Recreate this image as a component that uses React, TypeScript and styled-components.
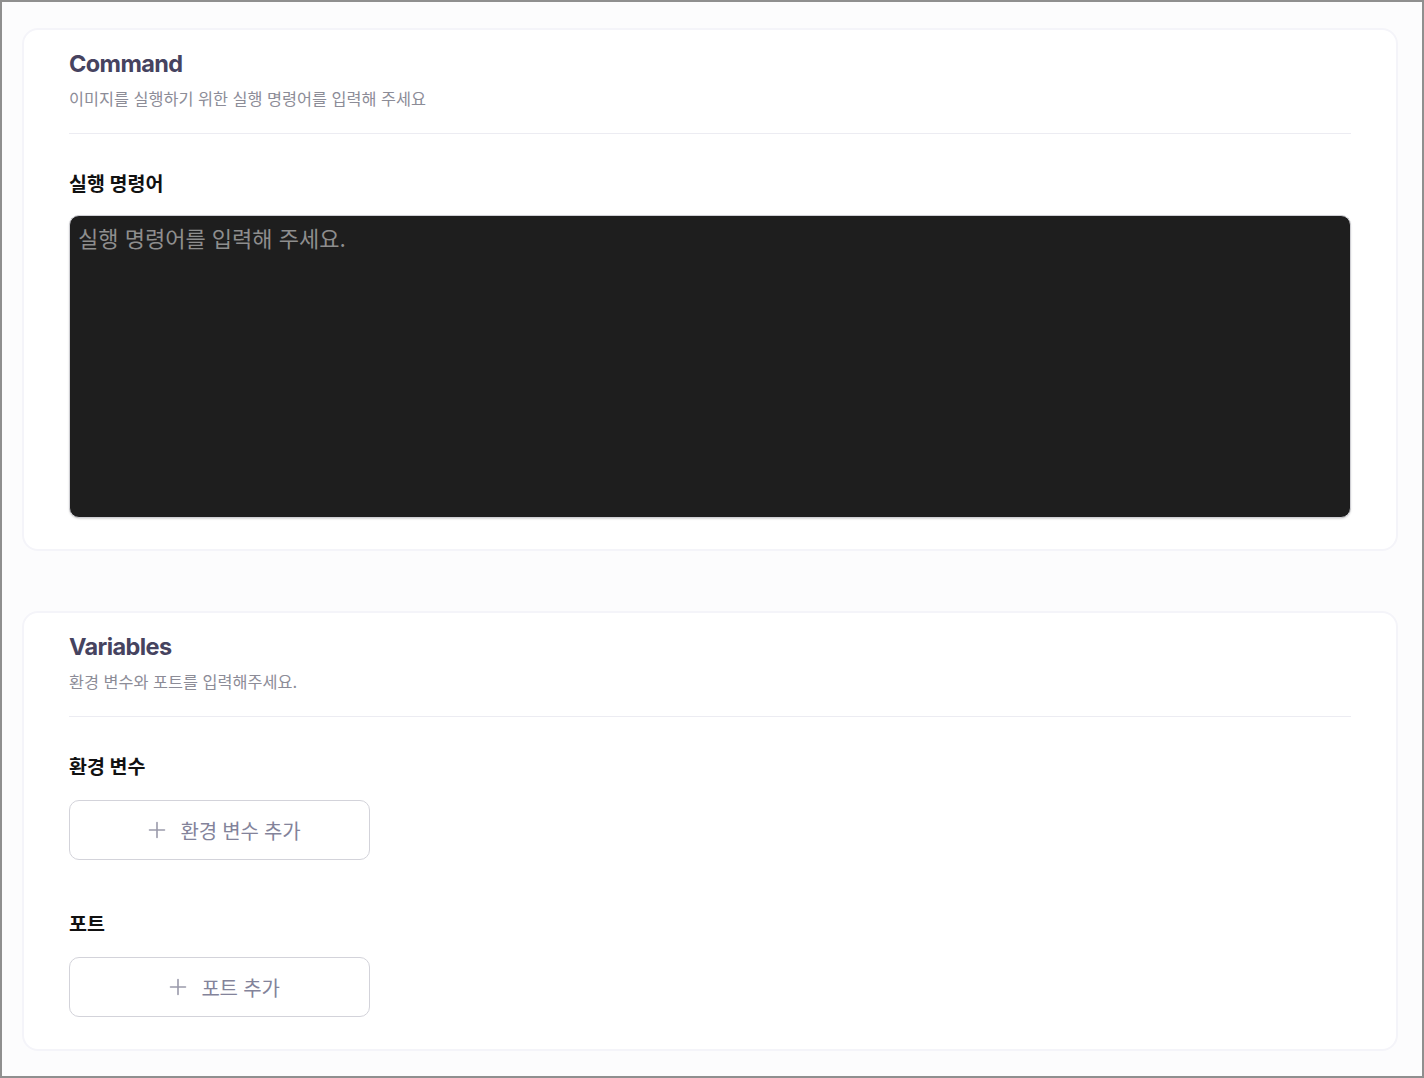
import React from "react";
import styled, { createGlobalStyle } from "styled-components";

const Global = createGlobalStyle`
  html, body { margin: 0; padding: 0; background: #ffffff; }
  * { box-sizing: border-box; }
  body { font-family: Inter, "Noto Sans CJK KR", sans-serif; }
`;

const Frame = styled.div`
  width: 1424px;
  height: 1078px;
  border: 2px solid #8f8f8f;
  background: #fcfcfd;
  padding: 26px 24px 0 20px;
  display: flex;
  flex-direction: column;
  gap: 60px;
  overflow: hidden;
`;

const Card = styled.section<{ $bottom: number }>`
  background: #ffffff;
  border: 2px solid #f4f4f9;
  border-radius: 16px;
  padding: 20px 45px ${(p) => p.$bottom}px 45px;
  display: flex;
  flex-direction: column;
`;

const Title = styled.h2`
  margin: 0;
  font-family: Inter, "Noto Sans CJK KR", sans-serif;
  font-size: 23.5px;
  line-height: 28px;
  font-weight: 700;
  letter-spacing: -0.6px;
  color: #46435f;
`;

const Subtitle = styled.p`
  margin: 11px 0 0;
  font-family: Inter, "Noto Sans CJK KR", sans-serif;
  font-size: 16.3px;
  line-height: 20px;
  color: #8c8c97;
  letter-spacing: 0;
`;

const Divider = styled.hr`
  margin: 24px 0 0;
  border: 0;
  height: 1px;
  background: #ececf2;
`;

const Label = styled.div<{ $top: number }>`
  margin-top: ${(p) => p.$top}px;
  font-family: Inter, "Noto Sans CJK KR", sans-serif;
  font-size: 19.5px;
  line-height: 24px;
  font-weight: 700;
  color: #111111;
  letter-spacing: 0;
`;

const CommandInput = styled.textarea`
  margin-top: 19px;
  width: 100%;
  height: 303px;
  resize: none;
  background: #1e1e1e;
  border: 1px solid #cfcfd4;
  border-radius: 10px;
  padding: 10px 8px;
  font-family: Inter, "Noto Sans CJK KR", sans-serif;
  font-size: 22px;
  line-height: 26px;
  color: #eeeeee;
  outline: none;
  letter-spacing: 0;
  box-shadow: 0 1px 2px rgba(0, 0, 0, 0.15);
  &::placeholder {
    color: #8e8e8e;
  }
`;

const AddButton = styled.button`
  margin-top: 21px;
  width: 301px;
  height: 60px;
  background: #ffffff;
  border: 1px solid #d3d3da;
  border-radius: 10px;
  display: flex;
  align-items: center;
  justify-content: center;
  gap: 14px;
  font-family: Inter, "Noto Sans CJK KR", sans-serif;
  font-size: 20px;
  color: #83839a;
  letter-spacing: -0.2px;
  cursor: pointer;
  padding: 0 0 0 10px;
`;

const Plus = () => (
  <svg width="18" height="18" viewBox="0 0 18 18" fill="none" stroke="#9a9aab" strokeWidth="1.6" strokeLinecap="round">
    <path d="M9 1.5v15M1.5 9h15" />
  </svg>
);

export default function App() {
  return (
    <>
      <Global />
      <Frame>
        <Card $bottom={31}>
          <Title>Command</Title>
          <Subtitle>이미지를 실행하기 위한 실행 명령어를 입력해 주세요</Subtitle>
          <Divider />
          <Label $top={38}>실행 명령어</Label>
          <CommandInput placeholder="실행 명령어를 입력해 주세요." />
        </Card>
        <Card $bottom={32}>
          <Title>Variables</Title>
          <Subtitle>환경 변수와 포트를 입력해주세요.</Subtitle>
          <Divider />
          <Label $top={38}>환경 변수</Label>
          <AddButton>
            <Plus />
            <span>환경 변수 추가</span>
          </AddButton>
          <Label $top={52}>포트</Label>
          <AddButton>
            <Plus />
            <span>포트 추가</span>
          </AddButton>
        </Card>
      </Frame>
    </>
  );
}
